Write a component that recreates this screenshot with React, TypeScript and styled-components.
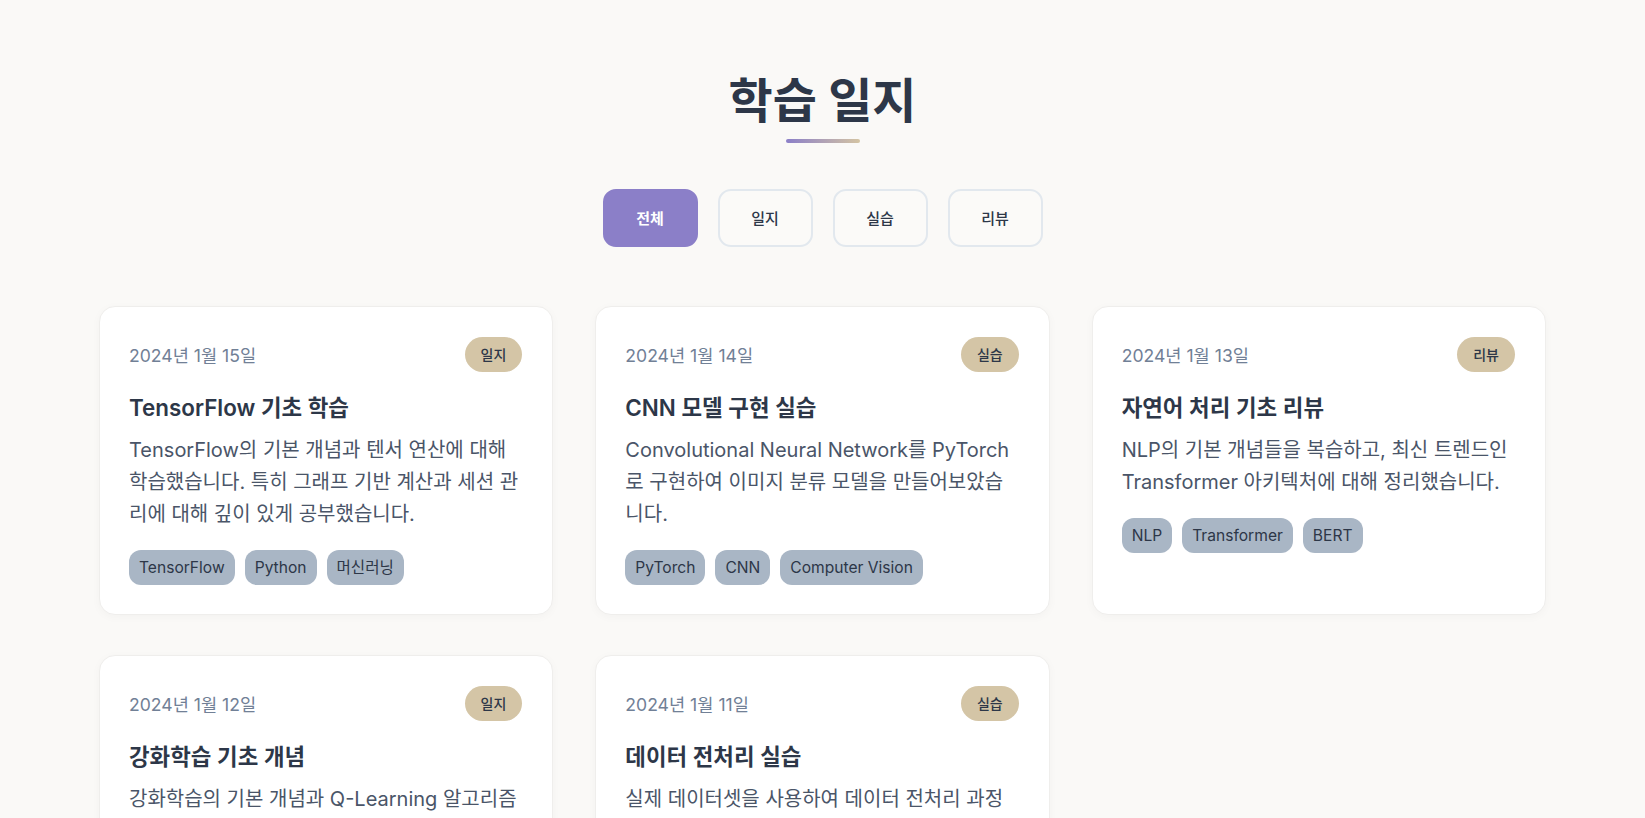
import React, { useState } from 'react';
import styled, { createGlobalStyle } from 'styled-components';

type Category = '전체' | '일지' | '실습' | '리뷰';

interface Entry {
  id: number;
  date: string;
  category: Exclude<Category, '전체'>;
  title: string;
  body: string;
  tags: string[];
}

const entries: Entry[] = [
  {
    id: 1,
    date: '2024년 1월 15일',
    category: '일지',
    title: 'TensorFlow 기초 학습',
    body: 'TensorFlow의 기본 개념과 텐서 연산에 대해 학습했습니다. 특히 그래프 기반 계산과 세션 관리에 대해 깊이 있게 공부했습니다.',
    tags: ['TensorFlow', 'Python', '머신러닝'],
  },
  {
    id: 2,
    date: '2024년 1월 14일',
    category: '실습',
    title: 'CNN 모델 구현 실습',
    body: 'Convolutional Neural Network를 PyTorch로 구현하여 이미지 분류 모델을 만들어보았습니다.',
    tags: ['PyTorch', 'CNN', 'Computer Vision'],
  },
  {
    id: 3,
    date: '2024년 1월 13일',
    category: '리뷰',
    title: '자연어 처리 기초 리뷰',
    body: 'NLP의 기본 개념들을 복습하고, 최신 트렌드인 Transformer 아키텍처에 대해 정리했습니다.',
    tags: ['NLP', 'Transformer', 'BERT'],
  },
  {
    id: 4,
    date: '2024년 1월 12일',
    category: '일지',
    title: '강화학습 기초 개념',
    body: '강화학습의 기본 개념과 Q-Learning 알고리즘에 대해 학습했습니다. 에이전트와 환경의 상호작용을 이해했습니다.',
    tags: ['강화학습', 'Q-Learning', 'Python'],
  },
  {
    id: 5,
    date: '2024년 1월 11일',
    category: '실습',
    title: '데이터 전처리 실습',
    body: '실제 데이터셋을 사용하여 데이터 전처리 과정을 실습했습니다. 결측치 처리와 정규화를 적용해보았습니다.',
    tags: ['Pandas', 'NumPy', '데이터분석'],
  },
];

const filters: Category[] = ['전체', '일지', '실습', '리뷰'];

const GlobalStyle = createGlobalStyle`
  * {
    box-sizing: border-box;
  }
  body {
    margin: 0;
    background-color: #faf9f7;
    color: #2d3748;
    font-family: Inter, 'Noto Sans CJK KR', sans-serif;
  }
`;

const Page = styled.main`
  max-width: 1447px;
  margin: 0 auto;
  padding: 72px 0 60px;
`;

const Header = styled.header`
  display: flex;
  flex-direction: column;
  align-items: center;
`;

const Title = styled.h1`
  margin: 0;
  font-size: 48px;
  line-height: 1.2;
  font-weight: 700;
  color: #2d3748;
`;

const Underline = styled.div`
  width: 74px;
  height: 4px;
  margin-top: 9px;
  border-radius: 2px;
  background: linear-gradient(90deg, #8b7fc8, #d4c4a3);
`;

const FilterBar = styled.nav`
  display: flex;
  justify-content: center;
  gap: 20px;
  margin-top: 46px;
`;

const FilterButton = styled.button<{ $active: boolean }>`
  width: 95px;
  height: 58px;
  border-radius: 13px;
  border: 2px solid ${(p) => (p.$active ? '#8b7fc8' : '#e2e8ee')};
  background-color: ${(p) => (p.$active ? '#8b7fc8' : '#fbfaf8')};
  color: ${(p) => (p.$active ? '#ffffff' : '#2d3748')};
  font-family: inherit;
  font-size: 15px;
  font-weight: ${(p) => (p.$active ? 700 : 500)};
  cursor: pointer;
`;

const Grid = styled.section`
  display: grid;
  grid-template-columns: repeat(3, 1fr);
  column-gap: 42px;
  row-gap: 40px;
  margin-top: 59px;
`;

const Card = styled.article`
  background-color: #ffffff;
  border: 1px solid #efeeec;
  border-radius: 16px;
  box-shadow: 0 2px 10px rgba(0, 0, 0, 0.03);
  padding: 30px 30px 29px 29px;
`;

const CardHead = styled.div`
  display: flex;
  justify-content: space-between;
  align-items: center;
`;

const Date = styled.span`
  font-size: 17.6px;
  color: #718096;
`;

const Badge = styled.span`
  padding: 7px 16px;
  border-radius: 20px;
  background-color: #d4c5a6;
  color: #2d3748;
  font-size: 14px;
  line-height: 21px;
  font-weight: 500;
`;

const CardTitle = styled.h2`
  margin: 20px 0 11px;
  font-size: 22.4px;
  line-height: 1.4;
  font-weight: 600;
  color: #2d3748;
`;

const Body = styled.p`
  margin: 0;
  font-size: 20px;
  line-height: 32px;
  color: #4a5568;
`;

const Tags = styled.div`
  display: flex;
  flex-wrap: wrap;
  gap: 10px;
  margin-top: 20px;
`;

const Tag = styled.span`
  padding: 6px 10px;
  border-radius: 12px;
  background-color: #a9b6c5;
  color: #2d3748;
  font-size: 15.6px;
  line-height: 23px;
`;

const App: React.FC = () => {
  const [filter, setFilter] = useState<Category>('전체');
  const shown = entries.filter((e) => filter === '전체' || e.category === filter);
  return (
    <>
      <GlobalStyle />
      <Page>
        <Header>
          <Title>학습 일지</Title>
          <Underline />
        </Header>
        <FilterBar>
          {filters.map((f) => (
            <FilterButton key={f} $active={f === filter} onClick={() => setFilter(f)}>
              {f}
            </FilterButton>
          ))}
        </FilterBar>
        <Grid>
          {shown.map((e) => (
            <Card key={e.id}>
              <CardHead>
                <Date>{e.date}</Date>
                <Badge>{e.category}</Badge>
              </CardHead>
              <CardTitle>{e.title}</CardTitle>
              <Body>{e.body}</Body>
              <Tags>
                {e.tags.map((t) => (
                  <Tag key={t}>{t}</Tag>
                ))}
              </Tags>
            </Card>
          ))}
        </Grid>
      </Page>
    </>
  );
};

export default App;
